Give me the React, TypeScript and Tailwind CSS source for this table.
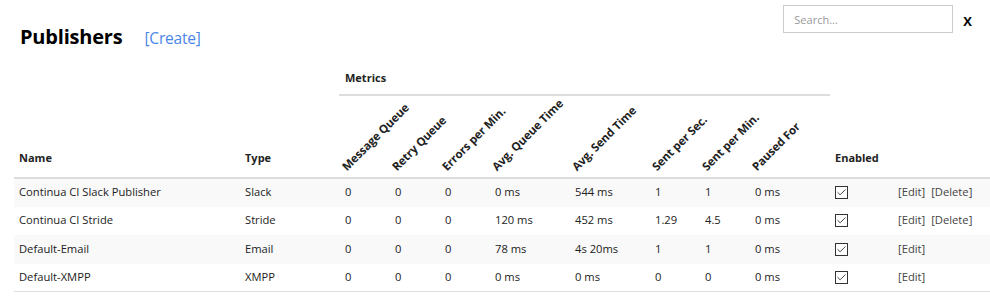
import { Check } from 'lucide-react';

interface Publisher {
  name: string;
  type: string;
  messageQueue: string;
  retryQueue: string;
  errorsPerMin: string;
  avgQueueTime: string;
  avgSendTime: string;
  sentPerSec: string;
  sentPerMin: string;
  pausedFor: string;
  enabled: boolean;
  canDelete: boolean;
}

const publishers: Publisher[] = [
  { name: 'Continua CI Slack Publisher', type: 'Slack', messageQueue: '0', retryQueue: '0', errorsPerMin: '0', avgQueueTime: '0 ms', avgSendTime: '544 ms', sentPerSec: '1', sentPerMin: '1', pausedFor: '0 ms', enabled: true, canDelete: true },
  { name: 'Continua CI Stride', type: 'Stride', messageQueue: '0', retryQueue: '0', errorsPerMin: '0', avgQueueTime: '120 ms', avgSendTime: '452 ms', sentPerSec: '1.29', sentPerMin: '4.5', pausedFor: '0 ms', enabled: true, canDelete: true },
  { name: 'Default-Email', type: 'Email', messageQueue: '0', retryQueue: '0', errorsPerMin: '0', avgQueueTime: '78 ms', avgSendTime: '4s 20ms', sentPerSec: '1', sentPerMin: '1', pausedFor: '0 ms', enabled: true, canDelete: false },
  { name: 'Default-XMPP', type: 'XMPP', messageQueue: '0', retryQueue: '0', errorsPerMin: '0', avgQueueTime: '0 ms', avgSendTime: '0 ms', sentPerSec: '0', sentPerMin: '0', pausedFor: '0 ms', enabled: true, canDelete: false },
];

const metricHeaders = [
  'Message Queue',
  'Retry Queue',
  'Errors per Min.',
  'Avg. Queue Time',
  'Avg. Send Time',
  'Sent per Sec.',
  'Sent per Min.',
  'Paused For',
];

function RotatedHeader({ label }: { label: string }) {
  return (
    <th className="p-0 align-bottom font-bold">
      <div className="relative h-[81px]">
        <span className="absolute left-[8px] bottom-[4px] origin-bottom-left -rotate-45 whitespace-nowrap text-[11.5px] leading-none tracking-[-0.1px]">
          {label}
        </span>
      </div>
    </th>
  );
}

export default function App() {
  return (
    <div className="w-[990px] bg-white font-['Open_Sans',sans-serif] text-[#222]">
      {/* Title bar */}
      <div className="flex items-start justify-between">
        <div className="flex items-baseline pl-[20px] pt-[24px]">
          <h1 className="text-[20px] font-bold leading-[26px] tracking-[-0.2px] text-black">Publishers</h1>
          <a className="ml-[22px] text-[15.5px] tracking-[-0.2px] text-[#4a86e8]">[Create]</a>
        </div>
        <div className="flex items-center pt-[5px] pr-[18px]">
          <input
            placeholder="Search..."
            className="h-[28px] w-[170px] border border-[#ccc] px-[10px] text-[11px] placeholder:text-[#999] outline-none"
          />
          <span className="ml-[10px] mt-[6px] text-[13px] font-bold text-black">X</span>
        </div>
      </div>

      {/* Table */}
      <table className="ml-[14px] mt-[20px] w-[976px] table-fixed border-collapse text-[11.2px]">
        <colgroup>
          <col className="w-[226px]" />
          <col className="w-[100px]" />
          <col className="w-[50px]" />
          <col className="w-[50px]" />
          <col className="w-[50px]" />
          <col className="w-[80px]" />
          <col className="w-[80px]" />
          <col className="w-[50px]" />
          <col className="w-[50px]" />
          <col className="w-[80px]" />
          <col className="w-[63px]" />
          <col />
        </colgroup>
        <thead>
          <tr>
            <th colSpan={2} />
            <th colSpan={8} className="p-0 text-left align-bottom text-[11px] font-bold">
              <div className="ml-[-1px] border-b-2 border-[#ddd] pb-[7px] pl-[6px]">Metrics</div>
            </th>
            <th colSpan={2} />
          </tr>
          <tr className="border-b-2 border-[#ddd]">
            <th className="px-[5px] pb-[10px] text-left align-bottom text-[11px] font-bold">Name</th>
            <th className="px-[5px] pb-[10px] text-left align-bottom text-[11px] font-bold">Type</th>
            {metricHeaders.map((h) => (
              <RotatedHeader key={h} label={h} />
            ))}
            <th className="px-[5px] pb-[10px] text-left align-bottom text-[11px] font-bold">Enabled</th>
            <th />
          </tr>
        </thead>
        <tbody>
          {publishers.map((p, i) => (
            <tr key={p.name} className={i % 2 === 0 ? 'h-[29px] bg-[#f9f9f9]' : 'h-[28px] bg-white'}>
              <td className="px-[5px]">{p.name}</td>
              <td className="px-[5px]">{p.type}</td>
              <td className="px-[5px]">{p.messageQueue}</td>
              <td className="px-[5px]">{p.retryQueue}</td>
              <td className="px-[5px]">{p.errorsPerMin}</td>
              <td className="px-[5px]">{p.avgQueueTime}</td>
              <td className="px-[5px]">{p.avgSendTime}</td>
              <td className="px-[5px]">{p.sentPerSec}</td>
              <td className="px-[5px]">{p.sentPerMin}</td>
              <td className="px-[5px]">{p.pausedFor}</td>
              <td className="px-[5px]">
                <span className="flex h-[13px] w-[13px] items-center justify-center border border-[#333] bg-white">
                  {p.enabled && <Check className="h-[11px] w-[11px] text-[#333]" strokeWidth={2} />}
                </span>
              </td>
              <td className="px-[5px] text-[#444]">
                <span>[Edit]</span>
                {p.canDelete && <span className="ml-[6px]">[Delete]</span>}
              </td>
            </tr>
          ))}
        </tbody>
        <tfoot>
          <tr className="border-t border-[#ddd]">
            <td colSpan={12} />
          </tr>
        </tfoot>
      </table>
    </div>
  );
}
